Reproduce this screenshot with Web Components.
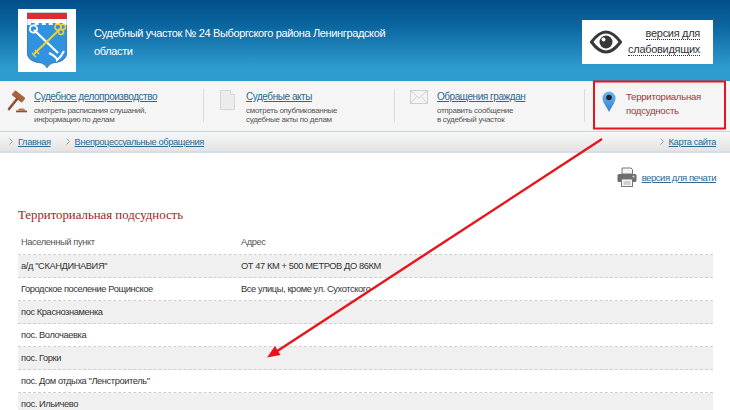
<!DOCTYPE html>
<html lang="ru">
<head>
<meta charset="utf-8">
<title>Территориальная подсудность</title>
<style>
  html, body { margin: 0; padding: 0; height: 410px; overflow: hidden; background: #fff; }
  body { font-family: "Liberation Sans", Arial, sans-serif; color: #333; position: relative; }
</style>
</head>
<body>
<court-header>Судебный участок № 24 Выборгского района Ленинградской области</court-header>
<court-nav>
  <nav-item href="#" title-text="Судебное делопроизводство" width="204" gap="7" pad="7">
    <svg slot="icon" width="20" height="24" viewBox="0 0 20 24">
      <rect x="5" y="3.500" width="13" height="6" rx="1" fill="#a9643c" transform="rotate(38 11.500 6.500)"/>
      <path d="M10 9 2 19" stroke="#8f5230" stroke-width="2.600" stroke-linecap="round"/>
      <path d="M11 20.500q0-2 2-2h3q2 0 2 2z" fill="#b87048"/>
      <rect x="9" y="20.500" width="11" height="1.800" fill="#8f5230"/>
    </svg>
    смотреть расписания слушаний,<br>информацию по делам
  </nav-item>
  <nav-item href="#" title-text="Судебные акты" width="191" gap="11" pad="16">
    <svg slot="icon" width="15" height="20" viewBox="0 0 15 20">
      <path d="M.5.500h10l4 4v15H.5z" fill="#ececec" stroke="#d6d6d6"/>
      <path d="M10.500.500v4h4" fill="#fafafa" stroke="#d6d6d6"/>
    </svg>
    смотреть опубликованные<br>судебные акты по делам
  </nav-item>
  <nav-item href="#" title-text="Обращения граждан" width="190" gap="9" pad="15">
    <svg slot="icon" width="18" height="14" viewBox="0 0 18 14">
      <rect x=".5" y=".5" width="17" height="13" fill="#f4f4f4" stroke="#cfcfcf"/>
      <path d="M.5.500 9 8 17.500.500M.5 13.500 6.500 6.500M17.500 13.500 11.500 6.500" fill="none" stroke="#cfcfcf"/>
    </svg>
    отправить сообщение<br>в судебный участок
  </nav-item>
  <nav-current>Территориальная<br>подсудность</nav-current>
</court-nav>
<court-crumbs>
  <crumb-link>Главная</crumb-link>
  <crumb-link>Внепроцессуальные обращения</crumb-link>
  <crumb-link slot="end">Карта сайта</crumb-link>
</court-crumbs>
<page-body heading="Территориальная подсудность">
  <terr-row head><span>Населенный пункт</span><span>Адрес</span></terr-row>
  <terr-row shade><span>а/д "СКАНДИНАВИЯ"</span><span>ОТ 47 КМ + 500 МЕТРОВ ДО 86КМ</span></terr-row>
  <terr-row><span>Городское поселение Рощинское</span><span>Все улицы, кроме ул. Сухотского</span></terr-row>
  <terr-row shade><span>пос Краснознаменка</span></terr-row>
  <terr-row><span>пос. Волочаевка</span></terr-row>
  <terr-row shade><span>пос. Горки</span></terr-row>
  <terr-row><span>пос. Дом отдыха "Ленстроитель"</span></terr-row>
  <terr-row shade><span>пос. Ильичево</span></terr-row>
</page-body>
<red-annotation></red-annotation>

<script>
class CourtHeader extends HTMLElement {
  constructor() {
    super();
    this.attachShadow({mode: 'open'}).innerHTML = `
      <style>
        :host { display: flex; align-items: center; height: 81px; padding: 0 17px 0 18px; box-sizing: border-box;
          background: linear-gradient(#03508a, #0a649e 30%, #2f9dd0 85%, #2e9bce); color: #fff; }
        #logo { width: 58px; height: 63px; background: #fff; display: flex; align-items: center; justify-content: center; flex: none; margin-top: -1px; }
        #title { width: 300px; margin-left: 18px; font-size: 11px; letter-spacing: -.36px; line-height: 18px; margin-top: 3px; }
        #eye { margin-left: auto; width: 131px; height: 44px; background: #fff; box-sizing: border-box; display: flex;
          align-items: center; justify-content: space-between; padding: 0 13px 0 8px; margin-top: 3px; }
        #label { color: #333; font-size: 11px; letter-spacing: -.3px; line-height: 16px; text-align: right; margin-top: -3px; }
        #label span { border-bottom: 1px dotted #333; }
      </style>
      <div id="logo">
        <svg width="40" height="57" viewBox="0 0 40 57">
          <path d="M0 1h40v40q-1 9-14 10q-4 1-6 5q-2-4-6-5Q1 50 0 41z" fill="#2f93e0" stroke="#3a5f80" stroke-width=".6"/>
          <path d="M.3 1h39.400v6H.3z" fill="#e02a2f"/>
          <path d="M.3 7h39.400v6h-4v-2h-3v2h-4v-2h-3v2h-4v-2h-3v2h-4v-2h-3v2h-4v-2H4v2H.3z" fill="#fff"/>
          <path d="M7 18 31 41" stroke="#fff" stroke-width="2.200"/>
          <circle cx="6.500" cy="17" r="3.600" fill="none" stroke="#fff" stroke-width="1.800"/>
          <path d="M22 41q8 4 8 7q4-3 7-9" fill="none" stroke="#fff" stroke-width="2"/>
          <path d="M33 17 7 42" stroke="#f1cf3a" stroke-width="2"/>
          <path d="M5 41l4 4M8 38l4 4" stroke="#f1cf3a" stroke-width="1.600"/>
          <circle cx="31" cy="15" r="3" fill="none" stroke="#f1cf3a" stroke-width="1.500"/>
          <circle cx="36" cy="15" r="2.500" fill="none" stroke="#f1cf3a" stroke-width="1.500"/>
          <circle cx="34" cy="20" r="2.500" fill="none" stroke="#f1cf3a" stroke-width="1.500"/>
        </svg>
      </div>
      <div id="title"><slot></slot></div>
      <div id="eye">
        <svg width="32" height="24" viewBox="0 0 32 24">
          <path d="M1.500 12C7 4.500 11 2 16 2S25 4.500 30.500 12C25 19.500 21 22 16 22S7 19.500 1.500 12z" fill="#fff" stroke="#383838" stroke-width="3"/>
          <circle cx="16" cy="12" r="6.500" fill="#383838"/>
          <circle cx="13.500" cy="9.500" r="2" fill="#fff"/>
        </svg>
        <div id="label"><span>версия для</span><br><span>слабовидящих</span></div>
      </div>`;
  }
}
customElements.define('court-header', CourtHeader);

class CourtNav extends HTMLElement {
  constructor() {
    super();
    this.attachShadow({mode: 'open'}).innerHTML = `
      <style>
        :host { display: flex; height: 49px; background: #f5f5f5; border-top: 1px solid #e8eef2; box-sizing: content-box; }
      </style>
      <slot></slot>`;
  }
}
customElements.define('court-nav', CourtNav);

class NavItem extends HTMLElement {
  constructor() {
    super();
    this.attachShadow({mode: 'open'}).innerHTML = `
      <style>
        :host { display: flex; box-sizing: border-box; padding-top: 8px; position: relative; }
        #icon { flex: none; line-height: 0; }
        a { display: block; color: #2a6a94; font-size: 10px; letter-spacing: -.45px; line-height: 14px; }
        #sub { font-size: 8px; letter-spacing: -.3px; line-height: 9px; color: #555; margin-top: 2px; }
        #rule { position: absolute; right: 0; top: 7px; width: 1px; height: 33px; background: #dcdcdc; }
      </style>
      <div id="icon"><slot name="icon"></slot></div>
      <div id="text"><a></a><div id="sub"><slot></slot></div></div>
      <div id="rule"></div>`;
  }
  connectedCallback() {
    this.style.width = this.getAttribute('width') + 'px';
    this.style.paddingLeft = this.getAttribute('pad') + 'px';
    this.style.gap = this.getAttribute('gap') + 'px';
    const a = this.shadowRoot.querySelector('a');
    a.href = this.getAttribute('href');
    a.textContent = this.getAttribute('title-text');
  }
}
customElements.define('nav-item', NavItem);

class NavCurrent extends HTMLElement {
  constructor() {
    super();
    this.attachShadow({mode: 'open'}).innerHTML = `
      <style>
        :host { display: flex; flex: 1; gap: 10px; padding: 8px 0 0 17px; color: #a8323a; font-size: 9.600px; letter-spacing: -.25px; line-height: 13.500px; }
      </style>
      <svg width="14" height="21" viewBox="0 0 14 21" style="margin-top:1px;flex:none">
        <defs><linearGradient id="pin" x1="0" y1="0" x2="0" y2="1"><stop offset="0" stop-color="#6db7ee"/><stop offset="1" stop-color="#2f80cf"/></linearGradient></defs>
        <path d="M7 21C4 15 .5 11.500.5 7a6.500 6.500 0 0 1 13 0C13.500 11.500 10 15 7 21z" fill="url(#pin)"/>
        <circle cx="7" cy="6.500" r="2.800" fill="#1c2430"/>
      </svg>
      <div><slot></slot></div>`;
  }
}
customElements.define('nav-current', NavCurrent);

class CourtCrumbs extends HTMLElement {
  constructor() {
    super();
    this.attachShadow({mode: 'open'}).innerHTML = `
      <style>
        :host { display: flex; justify-content: space-between; align-items: center; height: 22px; padding: 0 14px 0 9px;
          box-sizing: border-box; border-top: 1px solid #c6d6e4; border-bottom: 2px solid #d3dfe8;
          background: linear-gradient(#f7f7f7, #e4e4e4); }
        #left { display: flex; gap: 15px; }
      </style>
      <div id="left"><slot></slot></div>
      <slot name="end"></slot>`;
  }
}
customElements.define('court-crumbs', CourtCrumbs);

class CrumbLink extends HTMLElement {
  constructor() {
    super();
    this.attachShadow({mode: 'open'}).innerHTML = `
      <style>
        :host { display: inline-flex; align-items: center; gap: 5px; font-size: 9.300px; letter-spacing: -.4px; }
        a { color: #2a6a94; }
      </style>
      <svg width="4" height="7" viewBox="0 0 4 7"><path d="M.5.500 3.500 3.500.5 6.500" fill="none" stroke="#999"/></svg>
      <a href="#"><slot></slot></a>`;
  }
}
customElements.define('crumb-link', CrumbLink);

class PageBody extends HTMLElement {
  constructor() {
    super();
    this.attachShadow({mode: 'open'}).innerHTML = `
      <style>
        :host { display: block; padding: 13px 17px 0 18px; background: #fff; }
        #print { display: flex; justify-content: flex-end; align-items: center; gap: 5px; height: 21px; margin-right: -3px; }
        #print a { color: #2a6a94; font-size: 9.500px; letter-spacing: -.45px; margin-top: 2px; }
        h2 { margin: 20px 0 7px; font: normal 12.800px/16px "Liberation Serif", "Times New Roman", serif; color: #a01e22; }
      </style>
      <div id="print">
        <svg width="20" height="20" viewBox="0 0 20 20">
          <path d="M5 1h9l1.500 1.500V7h-10.500z" fill="#f4f4f4" stroke="#777"/>
          <rect x=".5" y="7" width="19" height="8" rx="1.500" fill="#6d6d6d"/>
          <rect x="4.500" y="12" width="11" height="7.500" fill="#f4f4f4" stroke="#777"/>
          <path d="M6.500 15h7M6.500 17h7" stroke="#aaa"/>
          <circle cx="16.500" cy="9.500" r="1" fill="#ddd"/>
        </svg>
        <a href="#">версия для печати</a>
      </div>
      <h2></h2>
      <slot></slot>`;
  }
  connectedCallback() {
    this.shadowRoot.querySelector('h2').textContent = this.getAttribute('heading');
  }
}
customElements.define('page-body', PageBody);

class TerrRow extends HTMLElement {
  constructor() {
    super();
    this.attachShadow({mode: 'open'}).innerHTML = `
      <style>
        :host { display: grid; grid-template-columns: 220px 1fr; align-items: center; height: 23px; box-sizing: border-box;
          padding: 0 3px; border-bottom: 1px dashed #cfcfcf; font-size: 9.300px; letter-spacing: -.4px; color: #333; }
        :host([shade]) { background: #f0f0f0; }
        :host([head]) { height: 25px; color: #555; }
      </style>
      <slot></slot>`;
  }
}
customElements.define('terr-row', TerrRow);

class RedAnnotation extends HTMLElement {
  constructor() {
    super();
    this.attachShadow({mode: 'open'}).innerHTML = `
      <style>
        :host { position: absolute; left: 0; top: 0; width: 730px; height: 410px; pointer-events: none; }
        svg { display: block; }
      </style>
      <svg width="730" height="410" viewBox="0 0 730 410">
        <rect x="594" y="81.500" width="131" height="47" fill="none" stroke="#e8141c" stroke-width="2"/>
        <path d="M602 139 275 352.500" stroke="#e8141c" stroke-width="2.400"/>
        <path d="M267 357.500 280.500 355 275 346z" fill="#e8141c"/>
      </svg>`;
  }
}
customElements.define('red-annotation', RedAnnotation);
</script>
</body>
</html>
